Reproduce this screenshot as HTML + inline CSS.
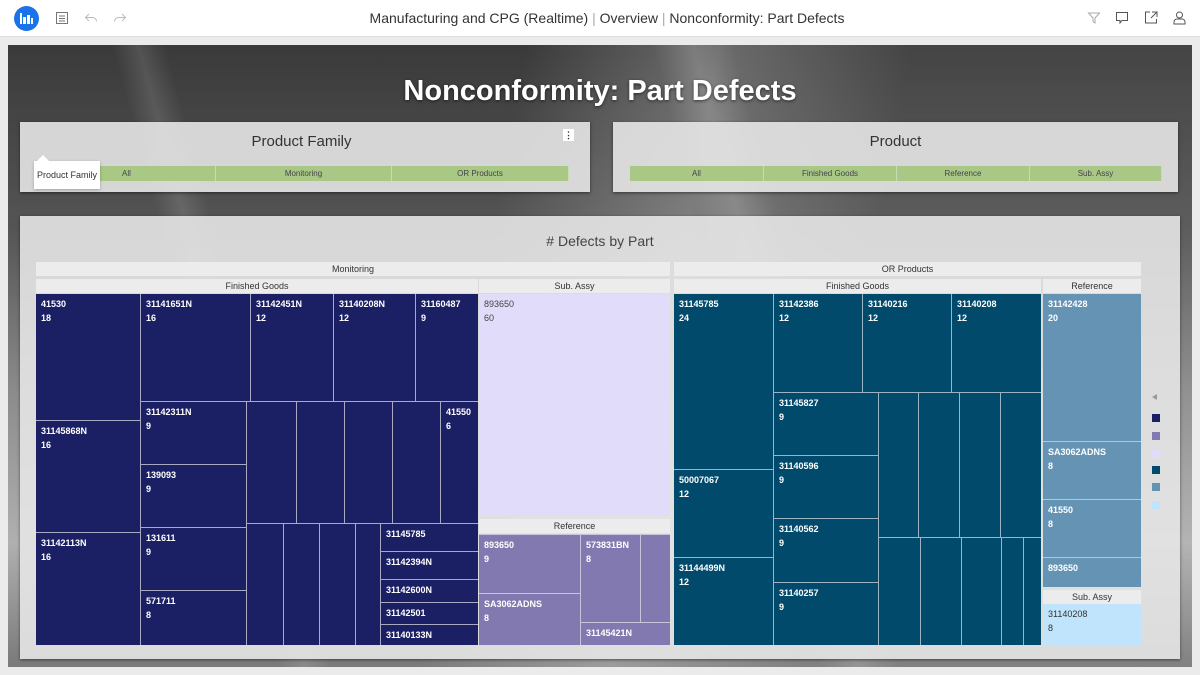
<!DOCTYPE html>
<html><head><meta charset="utf-8"><style>
*{margin:0;padding:0;box-sizing:border-box}
body{width:1200px;height:675px;overflow:hidden;background:#ebebeb;font-family:"Liberation Sans",sans-serif;position:relative}
.a{position:absolute}
.top{left:0;top:0;width:1200px;height:37px;background:#fff;border-bottom:1px solid #ddd}
.bg{left:8px;top:45px;width:1184px;height:622px;overflow:hidden;
background:
linear-gradient(100deg,rgba(255,255,255,0) 0,rgba(255,255,255,.0) 40%,rgba(255,255,255,.25) 55%,rgba(255,255,255,.05) 70%),
linear-gradient(75deg,rgba(255,255,255,0) 0 20%,rgba(255,255,255,.12) 22%,rgba(255,255,255,0) 24%,rgba(255,255,255,0) 60%,rgba(255,255,255,.15) 63%,rgba(255,255,255,0) 66%),
linear-gradient(180deg,#3a3a3a 0,#555 30%,#8a8a8a 55%,#b0b0b0 80%,#7a7a7a 100%)}
.pan{background:rgba(230,230,230,.9);box-shadow:0 1px 3px rgba(0,0,0,.5)}
.btn{background:#a9c886;height:15px;font-size:8px;color:#444;text-align:center;line-height:15px;border-right:1px solid #c8dcb2}
.h{background:#ececec;font-size:9px;color:#333;text-align:center;line-height:14px;height:14px}
.c{font-size:9px;font-weight:bold;color:#fff;padding:3px 5px;line-height:14px;font-family:"Liberation Sans",sans-serif}
.n{background:#1b1f63}.t{background:#014a6b}.p{background:#8379b1}.l{background:#e1dcf9;color:#444;font-weight:normal}.r{background:#6593b4}.s{background:#bfe4fb;color:#333;font-weight:normal}
.lg{width:8px;height:8px;left:1152px}
</style></head><body>
<div class="a top"></div>
<div class="a" style="left:14px;top:6px;width:25px;height:25px;border-radius:50%;background:#1a73e8"></div>
<svg class="a" style="left:19px;top:11px" width="15" height="15"><g fill="#fff"><rect x="1" y="2" width="2" height="11"/><rect x="4" y="6" width="3" height="7"/><rect x="8" y="4" width="3" height="9"/><rect x="12" y="7" width="2" height="6"/></g></svg>
<svg class="a" style="left:55px;top:11px" width="14" height="14" fill="none" stroke="#777"><rect x="1.5" y="1.5" width="11" height="11"/><path d="M4 5h6M4 7.5h6M4 10h6"/></svg>
<svg class="a" style="left:84px;top:11px" width="14" height="14" fill="none" stroke="#bbb"><path d="M5 3L1.5 6.5 5 10M1.5 6.5h7a4 4 0 0 1 4 4"/></svg>
<svg class="a" style="left:113px;top:11px" width="14" height="14" fill="none" stroke="#bbb"><path d="M9 3l3.5 3.5L9 10M12.5 6.5h-7a4 4 0 0 0-4 4"/></svg>
<div class="a" style="left:0;top:10px;width:1214px;text-align:center;font-size:14px;color:#333">Manufacturing and CPG (Realtime) <span style="color:#aaa">|</span> Overview <span style="color:#aaa">|</span> Nonconformity: Part Defects</div>
<svg class="a" style="left:1087px;top:11px" width="14" height="14" fill="none" stroke="#aaa"><path d="M1.5 2h11l-4.5 5v5l-2-1.5V7z"/></svg>
<svg class="a" style="left:1115px;top:11px" width="14" height="14" fill="none" stroke="#555"><path d="M1.5 1.5h11v8H7l-2 2.5V9.5H1.5z"/></svg>
<svg class="a" style="left:1144px;top:10px" width="15" height="15" fill="none" stroke="#555"><path d="M6 2H1.5v11h11V9M8 2h5v5M13 2L7 8"/></svg>
<svg class="a" style="left:1172px;top:10px" width="15" height="15" fill="none" stroke="#555"><circle cx="7.5" cy="5" r="3"/><path d="M2 14v-2a3 3 0 0 1 3-3h5a3 3 0 0 1 3 3v2z"/></svg>

<div class="a bg"></div>
<div class="a" style="left:0;top:75px;width:1200px;text-align:center;font-size:29px;font-weight:bold;color:#fff;text-shadow:0 1px 3px rgba(0,0,0,.6)">Nonconformity: Part Defects</div>

<div class="a pan" style="left:20px;top:122px;width:570px;height:70px"></div>
<div class="a" style="left:20px;top:133px;width:563px;text-align:center;font-size:15px;color:#333">Product Family</div>
<div class="a" style="left:563px;top:129px;width:11px;height:12px;background:#fff;font-size:9px;text-align:center;line-height:12px;color:#333;font-weight:bold">⋮</div>
<div class="a btn" style="left:36px;top:166px;width:180px;text-align:left;padding-left:86px">All</div>
<div class="a btn" style="left:216px;top:166px;width:176px">Monitoring</div>
<div class="a btn" style="left:392px;top:166px;width:177px">OR Products</div>
<div class="a" style="left:34px;top:161px;width:66px;height:28px;background:#fff;box-shadow:0 1px 3px rgba(0,0,0,.25);font-size:9px;color:#333;line-height:28px;text-align:center">Product Family</div>
<div class="a" style="left:37px;top:155px;width:0;height:0;border:6px solid transparent;border-bottom-color:#fff;border-top:0"></div>

<div class="a pan" style="left:613px;top:122px;width:565px;height:70px"></div>
<div class="a" style="left:613px;top:133px;width:565px;text-align:center;font-size:15px;color:#333">Product</div>
<div class="a btn" style="left:630px;top:166px;width:134px">All</div>
<div class="a btn" style="left:764px;top:166px;width:133px">Finished Goods</div>
<div class="a btn" style="left:897px;top:166px;width:133px">Reference</div>
<div class="a btn" style="left:1030px;top:166px;width:132px">Sub. Assy</div>

<div class="a pan" style="left:20px;top:216px;width:1160px;height:443px"></div>
<div class="a" style="left:20px;top:233px;width:1160px;text-align:center;font-size:14px;color:#444"># Defects by Part</div>

<div class="a h" style="left:36px;top:262px;width:634px">Monitoring</div>
<div class="a h" style="left:36px;top:279px;width:442px">Finished Goods</div>
<div class="a h" style="left:479px;top:279px;width:191px">Sub. Assy</div>
<div class="a h" style="left:674px;top:262px;width:467px">OR Products</div>
<div class="a h" style="left:674px;top:279px;width:367px">Finished Goods</div>
<div class="a h" style="left:1043px;top:279px;width:98px">Reference</div>
<div class="a h" style="left:479px;top:519px;width:191px">Reference</div>
<div class="a h" style="left:1043px;top:590px;width:98px">Sub. Assy</div>

<div class="a" style="left:36px;top:294px;width:442px;height:351px;background:#a8aac4"></div>
<div class="a c n" style="left:36px;top:294px;width:104px;height:126px">41530<br>18</div>
<div class="a c n" style="left:36px;top:421px;width:104px;height:111px">31145868N<br>16</div>
<div class="a c n" style="left:36px;top:533px;width:104px;height:112px">31142113N<br>16</div>
<div class="a c n" style="left:141px;top:294px;width:109px;height:107px">31141651N<br>16</div>
<div class="a c n" style="left:251px;top:294px;width:82px;height:107px">31142451N<br>12</div>
<div class="a c n" style="left:334px;top:294px;width:81px;height:107px">31140208N<br>12</div>
<div class="a c n" style="left:416px;top:294px;width:62px;height:107px">31160487<br>9</div>
<div class="a c n" style="left:141px;top:402px;width:105px;height:62px">31142311N<br>9</div>
<div class="a c n" style="left:141px;top:465px;width:105px;height:62px">139093<br>9</div>
<div class="a c n" style="left:141px;top:528px;width:105px;height:62px">131611<br>9</div>
<div class="a c n" style="left:141px;top:591px;width:105px;height:54px">571711<br>8</div>
<div class="a n" style="left:247px;top:402px;width:49px;height:121px"></div>
<div class="a n" style="left:297px;top:402px;width:47px;height:121px"></div>
<div class="a n" style="left:345px;top:402px;width:47px;height:121px"></div>
<div class="a n" style="left:393px;top:402px;width:47px;height:121px"></div>
<div class="a c n" style="left:441px;top:402px;width:37px;height:121px">41550<br>6</div>
<div class="a n" style="left:247px;top:524px;width:36px;height:121px"></div>
<div class="a n" style="left:284px;top:524px;width:35px;height:121px"></div>
<div class="a n" style="left:320px;top:524px;width:35px;height:121px"></div>
<div class="a n" style="left:356px;top:524px;width:24px;height:121px"></div>
<div class="a c n" style="left:381px;top:524px;width:97px;height:27px">31145785</div>
<div class="a c n" style="left:381px;top:552px;width:97px;height:27px">31142394N</div>
<div class="a c n" style="left:381px;top:580px;width:97px;height:22px">31142600N</div>
<div class="a c n" style="left:381px;top:603px;width:97px;height:21px">31142501</div>
<div class="a c n" style="left:381px;top:625px;width:97px;height:20px">31140133N</div>

<div class="a c l" style="left:479px;top:294px;width:191px;height:222px">893650<br>60</div>
<div class="a" style="left:479px;top:534px;width:191px;height:111px;background:#c8c4dc"></div>
<div class="a c p" style="left:479px;top:535px;width:101px;height:58px">893650<br>9</div>
<div class="a c p" style="left:479px;top:594px;width:101px;height:51px">SA3062ADNS<br>8</div>
<div class="a c p" style="left:581px;top:535px;width:59px;height:87px">573831BN<br>8</div>
<div class="a p" style="left:641px;top:535px;width:29px;height:87px"></div>
<div class="a c p" style="left:581px;top:623px;width:89px;height:22px">31145421N</div>

<div class="a" style="left:674px;top:294px;width:367px;height:351px;background:#9ab4c4"></div>
<div class="a c t" style="left:674px;top:294px;width:99px;height:175px">31145785<br>24</div>
<div class="a c t" style="left:674px;top:470px;width:99px;height:87px">50007067<br>12</div>
<div class="a c t" style="left:674px;top:558px;width:99px;height:87px">31144499N<br>12</div>
<div class="a c t" style="left:774px;top:294px;width:88px;height:98px">31142386<br>12</div>
<div class="a c t" style="left:863px;top:294px;width:88px;height:98px">31140216<br>12</div>
<div class="a c t" style="left:952px;top:294px;width:89px;height:98px">31140208<br>12</div>
<div class="a c t" style="left:774px;top:393px;width:104px;height:62px">31145827<br>9</div>
<div class="a c t" style="left:774px;top:456px;width:104px;height:62px">31140596<br>9</div>
<div class="a c t" style="left:774px;top:519px;width:104px;height:63px">31140562<br>9</div>
<div class="a c t" style="left:774px;top:583px;width:104px;height:62px">31140257<br>9</div>
<div class="a t" style="left:879px;top:393px;width:39px;height:144px"></div>
<div class="a t" style="left:919px;top:393px;width:40px;height:144px"></div>
<div class="a t" style="left:960px;top:393px;width:40px;height:144px"></div>
<div class="a t" style="left:1001px;top:393px;width:40px;height:144px"></div>
<div class="a t" style="left:879px;top:538px;width:41px;height:107px"></div>
<div class="a t" style="left:921px;top:538px;width:40px;height:107px"></div>
<div class="a t" style="left:962px;top:538px;width:39px;height:107px"></div>
<div class="a t" style="left:1002px;top:538px;width:21px;height:107px"></div>
<div class="a t" style="left:1024px;top:538px;width:17px;height:107px"></div>

<div class="a" style="left:1043px;top:294px;width:98px;height:293px;background:#b0c8d8"></div>
<div class="a c r" style="left:1043px;top:294px;width:98px;height:147px">31142428<br>20</div>
<div class="a c r" style="left:1043px;top:442px;width:98px;height:57px">SA3062ADNS<br>8</div>
<div class="a c r" style="left:1043px;top:500px;width:98px;height:57px">41550<br>8</div>
<div class="a c r" style="left:1043px;top:558px;width:98px;height:29px">893650</div>
<div class="a c s" style="left:1043px;top:604px;width:98px;height:41px">31140208<br>8</div>

<div class="a" style="left:1152px;top:394px;width:0;height:0;border:3.5px solid transparent;border-right:5px solid #999;border-left:0"></div>
<div class="a lg" style="top:414px;background:#1b1f63"></div>
<div class="a lg" style="top:432px;background:#8379b1"></div>
<div class="a lg" style="top:450px;background:#e1dcf9"></div>
<div class="a lg" style="top:466px;background:#014a6b"></div>
<div class="a lg" style="top:483px;background:#6593b4"></div>
<div class="a lg" style="top:501px;background:#bfe4fb"></div>
</body></html>
